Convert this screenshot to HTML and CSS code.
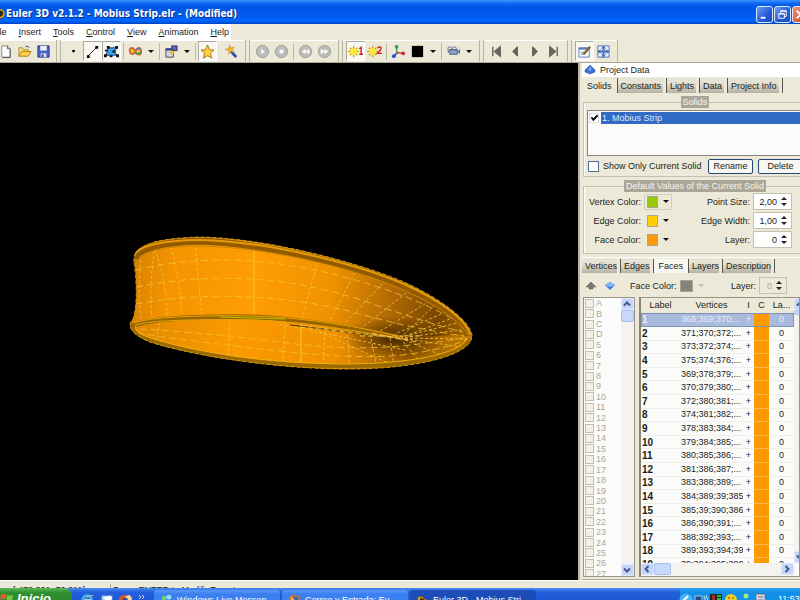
FILE: index.html
```html
<!DOCTYPE html>
<html lang="en">
<head>
<meta charset="utf-8">
<title>Euler 3D v2.1.2 - Mobius Strip.elr - (Modified)</title>
<link rel="stylesheet" href="styles.css">
</head>
<body>
<div class="app">
  <header class="titlebar">
    <svg class="logo" viewBox="0 0 5 12"><circle cx="-1" cy="6" r="5" fill="#2b2a10"/><path d="M-2 2Q4 1 4 6Q3 10-2 10" fill="none" stroke="#e0a010" stroke-width="1.500"/></svg>
    <h1>Euler 3D v2.1.2 - Mobius Strip.elr - (Modified)</h1>
    <div class="winbtns">
      <button aria-label="Minimize"><svg viewBox="0 0 16 16"><path d="M4 11.500h5" stroke="#fff" stroke-width="2"/></svg></button>
      <button aria-label="Restore"><svg viewBox="0 0 16 16"><path d="M6 6V4h6v6h-2M6 4.500h6M4 7h6v5H4zM4 7.500h6" fill="none" stroke="#fff"/></svg></button>
      <button class="close" aria-label="Close"><svg viewBox="0 0 16 16"><path d="M4 4l8 8M12 4l-8 8" stroke="#fff" stroke-width="2"/></svg></button>
    </div>
  </header>

  <nav class="menubar">
    <div class="menus">
      <a href="#"><u>F</u>ile</a><a href="#"><u>I</u>nsert</a><a href="#"><u>T</u>ools</a><a href="#"><u>C</u>ontrol</a><a href="#"><u>V</u>iew</a><a href="#"><u>A</u>nimation</a><a href="#"><u>H</u>elp</a>
    </div>
  </nav>

  <div class="toolbar">
    <div class="group first">
      <button aria-label="New"><svg viewBox="0 0 16 16"><path d="M4 2h6l3 3v9H4z" fill="#fff" stroke="#8a8a84"/><path d="M10 2v3h3M13 6v8.500H5" fill="none" stroke="#555"/></svg></button>
      <button aria-label="Open"><svg viewBox="0 0 16 16"><path d="M2 13V4h4l1 2h5v3" fill="#f6dc7a" stroke="#b8902c"/><path d="M2 13l3-5h10l-3 5z" fill="#ffd24a" stroke="#a8801c"/><path d="M9 3q3-2 4 1" fill="none" stroke="#447"/></svg></button>
      <button aria-label="Save"><svg viewBox="0 0 16 16"><path d="M2 2h12v12H2z" fill="#4a63c4" stroke="#26388c"/><path d="M4.500 2h7v5h-7z" fill="#e8eefc"/><path d="M5 10h6v4H5z" fill="#dfe4f2"/><path d="M6 11h2v3H6z" fill="#26388c"/></svg></button>
    </div>
    <div class="group">
      <button aria-label="Points"><svg viewBox="0 0 16 16"><circle cx="8" cy="7.500" r="1.500"/></svg></button>
      <button class="on" aria-label="Edges"><svg viewBox="0 0 16 16"><path d="M3 13L13 3" stroke="#222"/><path d="M2 12h3v3H2zM11 2h3v3h-3z"/></svg></button>
      <button class="on" aria-label="Faces"><svg viewBox="0 0 16 16"><path d="M4 4h10q-4 4 0 8H2q2-4 2-8z" fill="#3d9be8" stroke="#1a4c80"/><path d="M3 2h3v3H3zM12 2h3v3h-3zM0 11h3v3H0zM13 11h3v3h-3zM1 6h3v2H1zM9 7h3v2H9zM6 12h3v2H6z" fill="#111"/></svg></button>
      <i class="sep"></i>
      <button aria-label="Rings"><svg viewBox="0 0 16 16"><path d="M8 8C5 2 1 4 2 8s5 3 6 0 5-6 6-1-4 6-6 1z" fill="#f4c53a" stroke="#d3682f" stroke-width="2"/><path d="M8 9q2 4 6-1" fill="none" stroke="#3f9d58" stroke-width="2"/><path d="M9 6q3-3 4 0" fill="none" stroke="#6474c8" stroke-width="2"/></svg></button>
      <button class="drop" aria-label="Ring options"></button>
      <i class="sep"></i>
      <button aria-label="Transform"><svg viewBox="0 0 16 16"><path d="M2 5h8v9H2z" fill="#cdd3e8" stroke="#445"/><path d="M2 5h8v2H2z" fill="#34428c"/><path d="M8 2h6v5H9z" fill="#5a6ac8" stroke="#334"/><path d="M5 9l4-2 3 2-3 2z" fill="#e8b83c"/></svg></button>
      <button class="drop" aria-label="Transform options"></button>
      <i class="sep"></i>
      <button class="on" aria-label="Favorite"><svg viewBox="0 0 16 16"><path d="M8 1l2 5 5 .5-4 3.500 1.500 5L8 12.500 3.500 15 5 10 1 6.500 6 6z" fill="#ffd23c" stroke="#a8741c"/></svg></button>
      <i class="sep blank"></i>
      <button aria-label="Wizard"><svg viewBox="0 0 16 16"><path d="M6 6l7 8" stroke="#2a4cb0" stroke-width="3"/><path d="M6 1l1 3 4-1-2 3 2 3-4-1-2 3V7L1 6l4-2z" fill="#f2b430" stroke="#c88a1c" stroke-width=".5"/></svg></button>
    </div>
    <div class="group">
      <button aria-label="Play"><svg viewBox="0 0 16 16"><circle cx="8" cy="8" r="6.500" fill="#bcbcb8" stroke="#9a9a96"/><path d="M6.500 5l4 3-4 3z" fill="#fff"/></svg></button>
      <button aria-label="Stop"><svg viewBox="0 0 16 16"><circle cx="8" cy="8" r="6.500" fill="#bcbcb8" stroke="#9a9a96"/><path d="M6 6h4v4H6z" fill="#fff"/></svg></button>
      <i class="sep"></i>
      <button aria-label="Rewind"><svg viewBox="0 0 16 16"><circle cx="8" cy="8" r="6.500" fill="#bcbcb8" stroke="#9a9a96"/><path d="M8 5v6L4 8zM12 5v6L8 8z" fill="#fff"/></svg></button>
      <button aria-label="Fast forward"><svg viewBox="0 0 16 16"><circle cx="8" cy="8" r="6.500" fill="#bcbcb8" stroke="#9a9a96"/><path d="M4 5l4 3-4 3zM8 5l4 3-4 3z" fill="#fff"/></svg></button>
    </div>
    <div class="group">
      <button class="on" aria-label="Light 1"><svg viewBox="0 0 16 16"><path d="M6 2v12M0 8h12M2 4l8 8M10 4l-8 8" stroke="#d8a800" stroke-width="1.500"/><circle cx="6" cy="8" r="3.500" fill="#ffe838"/><path d="M12 5l2-1.500V11M12 11h4" fill="none" stroke="#d02020" stroke-width="1.500"/></svg></button>
      <button aria-label="Light 2"><svg viewBox="0 0 16 16"><path d="M6 2v12M0 8h12M2 4l8 8M10 4l-8 8" stroke="#d8a800" stroke-width="1.500"/><circle cx="6" cy="8" r="3.500" fill="#ffe838"/><path d="M11 4q4-2 4 1 0 1-4 5h5" fill="none" stroke="#d02020" stroke-width="1.500"/></svg></button>
      <i class="sep"></i>
      <button aria-label="Axes"><svg viewBox="0 0 16 16"><path d="M6 3v7" stroke="#35a050" stroke-width="1.500"/><path d="M6 10l-3 3" stroke="#2858c8" stroke-width="2"/><path d="M6 9l6 1" stroke="#c03030" stroke-width="1.500"/><circle cx="6" cy="3" r="2" fill="#35a050"/><circle cx="3" cy="13" r="2" fill="#2858c8"/><circle cx="13" cy="10" r="2" fill="#c83030"/></svg></button>
      <button aria-label="Background color"><svg viewBox="0 0 16 16"><path d="M2 2h12v12H2z"/></svg></button>
      <button class="drop" aria-label="Background options"></button>
      <i class="sep"></i>
      <button aria-label="Camera"><svg viewBox="0 0 16 16"><path d="M4 6h8v5H4z" fill="#8fa6c8" stroke="#4a5c80"/><circle cx="4" cy="5" r="2" fill="none" stroke="#5a6c90"/><circle cx="9" cy="5" r="2" fill="none" stroke="#5a6c90"/><path d="M12 8l3-3v6zM1 7h2v3" fill="#667a9c"/></svg></button>
      <button class="drop" aria-label="Camera options"></button>
    </div>
    <div class="group">
      <button aria-label="First frame"><svg viewBox="0 0 16 16"><path d="M4 3v10M12 3v10l-6-5z" fill="#66665e" stroke="#66665e" stroke-width="1.500"/></svg></button>
      <button aria-label="Previous frame"><svg viewBox="0 0 16 16"><path d="M10 3v10L5 8z" fill="#66665e" stroke="#55554e"/></svg></button>
      <button aria-label="Next frame"><svg viewBox="0 0 16 16"><path d="M6 3v10l5-5z" fill="#66665e" stroke="#55554e"/></svg></button>
      <button aria-label="Last frame"><svg viewBox="0 0 16 16"><path d="M12 3v10M4 3v10l6-5z" fill="#66665e" stroke="#66665e" stroke-width="1.500"/></svg></button>
    </div>
    <div class="group">
      <button class="on" aria-label="Edit data"><svg viewBox="0 0 16 16"><path d="M2 4h11v10H2z" fill="#f4f8ff" stroke="#5a80c0"/><path d="M2 4h11v2H2z" fill="#5a80c0"/><path d="M4 9h4M4 11h4" stroke="#88a"/><path d="M7 11l7-8" stroke="#8a6230" stroke-width="2.500"/></svg></button>
      <button aria-label="Fit view"><svg viewBox="0 0 16 16"><path d="M2 2h12v12H2z" fill="#e8f0ff" stroke="#4a70b8"/><path d="M8 2v12M2 8h12" stroke="#4a70b8" stroke-width="2"/><path d="M5 6L3 8l2 2M11 6l2 2-2 2M6 5l2-2 2 2M6 11l2 2 2-2" fill="none" stroke="#2850a8"/></svg></button>
    </div>
  </div>

  <main class="work">
    <section class="viewport" aria-label="3D view">
      <svg viewBox="0 63 578 517">
        <defs>
          <linearGradient id="outer" gradientUnits="userSpaceOnUse" x1="130" y1="280" x2="472" y2="330">
            <stop offset="0" stop-color="#d98200"/><stop offset=".12" stop-color="#f59400"/><stop offset=".35" stop-color="#ff9d04"/><stop offset=".58" stop-color="#f09200"/><stop offset=".78" stop-color="#a86404"/><stop offset=".9" stop-color="#754400"/><stop offset="1" stop-color="#a86800"/>
          </linearGradient>
          <linearGradient id="inner" gradientUnits="userSpaceOnUse" x1="130" y1="330" x2="472" y2="340">
            <stop offset="0" stop-color="#e08800"/><stop offset=".3" stop-color="#fc9a00"/><stop offset=".6" stop-color="#f09200"/><stop offset=".82" stop-color="#945800"/><stop offset="1" stop-color="#c47c00"/>
          </linearGradient>
          <radialGradient id="pinch" gradientUnits="userSpaceOnUse" cx="394" cy="338" r="52" gradientTransform="matrix(1 0 0 .42 0 196)">
            <stop offset="0" stop-color="#3c2400"/><stop offset="1" stop-color="#5a3400" stop-opacity="0"/>
          </radialGradient>
          <clipPath id="shape"><path d="M134 258C134 246 154 238 200 237C260 238 350 259 404 282C440 298 472 322 472 336C472 354 420 370 340 369C270 368 190 355 150 342C132 335 126 326 133 319Q139 300 134 258Z"/></clipPath>
        </defs>
        <g clip-path="url(#shape)">
          <path d="M120 230H480V380H120Z" fill="url(#outer)"/>
          <path d="M130 328C132 318 200 315 255 317C310 321 360 330 400 338L474 334V372H130Z" fill="url(#inner)"/>
          <path d="M340 290H475V370H340Z" fill="url(#pinch)"/>
          <g fill="none" stroke="#f8c236" stroke-width=".8" stroke-dasharray="7 4">
            <path d="M136 270Q190 257 250 261T375 286 468 330"/>
            <path d="M136 287Q190 276 250 279T370 303 467 333"/>
            <path d="M136 304Q190 294 250 297T360 314 464 336"/>
            <path d="M140 329Q210 333 280 342T400 346 468 337"/>
            <path d="M137 333Q210 344 290 352T410 354 470 338"/>
          </g>
          <g fill="none" stroke="#f6c63e" stroke-width=".8" stroke-dasharray="3 2">
            <path d="M142 250Q137 288 141 319M155 246Q149 285 152 318M155 249Q168 288 167 317M171 247Q181 285 182 317"/>
            <path d="M195 243L202 316M319 258L302 318M357 268L329 323M386 280L343 325M410 290L360 329M430 301L377 333M446 312L390 336M461 322L397 338"/>
            <path d="M400 338L438 302M400 338L455 317M400 338L468 329M400 338L470 339M400 338L462 347M400 338L443 356M400 338L420 362M390 338L394 366M370 334L377 368M347 330L350 369M325 327L323 369M285 321L283 364M230 318L228 359M160 322L155 344M300 325L398 339M280 324L405 350M320 332L390 364"/>
          </g>
          <path d="M254 240V320M301 325V367" stroke="#ffc52c"/>
          <path d="M135 259C137 249 160 242 200 241C260 243 350 263 404 286C440 302 466 322 468 336" fill="none" stroke="#935a00" stroke-width="7"/>
          <path d="M134 256C137 247 160 240 200 240C260 241 350 261 404 284C440 300 467 320 470 335" fill="none" stroke="#e39a08" stroke-width="2"/>
          <path d="M137 262C142 250 170 246 200 246C260 247 340 264 394 286C430 301 460 320 468 335" fill="none" stroke="#c88806"/>
          <path d="M132 328C134 319 200 316 255 317C310 320 360 329 402 338" fill="none" stroke="#9b6200" stroke-width="5"/>
          <path d="M132 324C144 317 200 315 255 316C310 318 360 327 402 337" fill="none" stroke="#dfa600"/>
          <path d="M136 325C150 320 200 319 255 320C310 322 360 332 402 339" fill="none" stroke="#e6a40c"/>
          <path d="M220 317L285 319" stroke="#b9c600"/>
          <path d="M290 325Q340 331 399 339" fill="none" stroke="#4a3000"/>
          <path d="M300 327Q350 332 412 340M360 336h60M372 333l44 9" fill="none" stroke="#ffd75c" stroke-width=".8" stroke-dasharray="5 3"/>
          <path d="M133 323Q128 334 152 341C200 356 270 366 340 366C420 366 468 354 470 338" fill="none" stroke="#9b6a00" stroke-width="4"/>
          <path d="M136 325Q132 332 154 339C200 353 270 363 340 364C415 364 461 353 467 338" fill="none" stroke="#f0ad10"/>
        </g>
        <path d="M134 262C132 246 154 238 200 237C260 238 350 259 404 282C440 298 472 322 472 336C472 354 420 370 340 369C270 368 190 355 150 342C132 335 126 326 133 319Q139 300 134 262" fill="none" stroke="#c99614" stroke-dasharray="4 2"/>
      </svg>
    </section>

    <aside class="panel">
      <div class="phead"><svg viewBox="0 0 12 10"><path d="M6 0l5 5v2L6 9 1 7V5z" fill="#3b6fd6" stroke="#28509c" stroke-width=".5"/><path d="M6 1l2 4-2 1-2-1z" fill="#7aa0ec"/></svg>Project Data</div>
      <div class="tabs" role="tablist">
        <button class="active" role="tab">Solids</button><button role="tab">Constants</button><button role="tab">Lights</button><button role="tab">Data</button><button role="tab">Project Info</button>
      </div>
      <fieldset class="solids">
        <legend>Solids</legend>
        <div class="list">
          <div class="item"><input type="checkbox" id="s1" checked><label for="s1">1. Mobius Strip</label></div>
        </div>
        <div class="actions">
          <input type="checkbox" id="only"><label for="only">Show Only Current Solid</label>
          <button>Rename</button><button>Delete</button>
        </div>
      </fieldset>
      <fieldset class="defaults">
        <legend>Default Values of the Current Solid</legend>
        <div class="form">
          <span class="lab" id="vc">Vertex Color:</span><button class="color raised" aria-labelledby="vc"><i class="sw green"></i><i class="tri"></i></button>
          <label for="ps">Point Size:</label><div class="spin"><input id="ps" value="2,00"><button aria-label="Point size up or down"></button></div>
          <span class="lab" id="ec">Edge Color:</span><button class="color" aria-labelledby="ec"><i class="sw yellow"></i><i class="tri"></i></button>
          <label for="ew">Edge Width:</label><div class="spin"><input id="ew" value="1,00"><button aria-label="Edge width up or down"></button></div>
          <span class="lab" id="fc">Face Color:</span><button class="color" aria-labelledby="fc"><i class="sw orange"></i><i class="tri"></i></button>
          <label for="ly">Layer:</label><div class="spin"><input id="ly" value="0"><button aria-label="Layer up or down"></button></div>
        </div>
      </fieldset>
      <div class="tabs lower" role="tablist">
        <button role="tab">Vertices</button><button role="tab">Edges</button><button class="active" role="tab">Faces</button><button role="tab">Layers</button><button role="tab">Description</button>
      </div>
      <div class="facebar">
        <button class="mv" aria-label="Move up"><svg viewBox="0 0 12 10"><path d="M6 1l5 5H8v2H4V6H1z" fill="#77776c" stroke="#55554e" stroke-width=".5"/></svg></button>
        <button class="mv" aria-label="Move down"><svg viewBox="0 0 12 10"><path d="M6 9L1 4l5-3 5 3z" fill="#3878e0"/><path d="M1 4l5-3 5 3-5 2z" fill="#8ab6fa"/></svg></button>
        <span class="lab" id="fc2">Face Color:</span><button class="color" disabled aria-labelledby="fc2"><i class="sw gray"></i><i class="tri"></i></button>
        <label for="ly2">Layer:</label><div class="spin off"><input id="ly2" value="0" disabled><button aria-label="Face layer up or down"></button></div>
      </div>
      <div class="data">
        <div class="layers">
          <div class="checks">
            <label><input type="checkbox" disabled>A</label><label><input type="checkbox" disabled>B</label><label><input type="checkbox" disabled>C</label><label><input type="checkbox" disabled>D</label><label><input type="checkbox" disabled>5</label><label><input type="checkbox" disabled>6</label><label><input type="checkbox" disabled>7</label><label><input type="checkbox" disabled>8</label><label><input type="checkbox" disabled>9</label><label><input type="checkbox" disabled>10</label><label><input type="checkbox" disabled>11</label><label><input type="checkbox" disabled>12</label><label><input type="checkbox" disabled>13</label><label><input type="checkbox" disabled>14</label><label><input type="checkbox" disabled>15</label><label><input type="checkbox" disabled>16</label><label><input type="checkbox" disabled>17</label><label><input type="checkbox" disabled>18</label><label><input type="checkbox" disabled>19</label><label><input type="checkbox" disabled>20</label><label><input type="checkbox" disabled>21</label><label><input type="checkbox" disabled>22</label><label><input type="checkbox" disabled>23</label><label><input type="checkbox" disabled>24</label><label><input type="checkbox" disabled>25</label><label><input type="checkbox" disabled>26</label><label><input type="checkbox" disabled>27</label>
          </div>
          <div class="vbar">
            <button aria-label="Scroll layers up"><svg viewBox="0 0 12 12"><path d="M3 7.500l3-3 3 3" /></svg></button>
            <i class="thumb"></i>
            <button class="end" aria-label="Scroll layers down"><svg viewBox="0 0 12 12"><path d="M3 4.500l3 3 3-3"/></svg></button>
          </div>
        </div>
        <div class="faces">
          <div class="tablebox">
            <div class="clip">
              <table>
                <thead><tr><th class="c1">Label</th><th class="c2">Vertices</th><th class="c3">I</th><th class="c4">C</th><th class="c5">La...</th></tr></thead>
                <tbody>
                  <tr class="sel"><th>1</th><td>368;369;370;...</td><td>+</td><td class="o"></td><td>0</td></tr>
                  <tr><th>2</th><td>371;370;372;...</td><td>+</td><td class="o"></td><td>0</td></tr>
                  <tr><th>3</th><td>373;372;374;...</td><td>+</td><td class="o"></td><td>0</td></tr>
                  <tr><th>4</th><td>375;374;376;...</td><td>+</td><td class="o"></td><td>0</td></tr>
                  <tr><th>5</th><td>369;378;379;...</td><td>+</td><td class="o"></td><td>0</td></tr>
                  <tr><th>6</th><td>370;379;380;...</td><td>+</td><td class="o"></td><td>0</td></tr>
                  <tr><th>7</th><td>372;380;381;...</td><td>+</td><td class="o"></td><td>0</td></tr>
                  <tr><th>8</th><td>374;381;382;...</td><td>+</td><td class="o"></td><td>0</td></tr>
                  <tr><th>9</th><td>378;383;384;...</td><td>+</td><td class="o"></td><td>0</td></tr>
                  <tr><th>10</th><td>379;384;385;...</td><td>+</td><td class="o"></td><td>0</td></tr>
                  <tr><th>11</th><td>380;385;386;...</td><td>+</td><td class="o"></td><td>0</td></tr>
                  <tr><th>12</th><td>381;386;387;...</td><td>+</td><td class="o"></td><td>0</td></tr>
                  <tr><th>13</th><td>383;388;389;...</td><td>+</td><td class="o"></td><td>0</td></tr>
                  <tr><th>14</th><td>384;389;39;385</td><td>+</td><td class="o"></td><td>0</td></tr>
                  <tr><th>15</th><td>385;39;390;386</td><td>+</td><td class="o"></td><td>0</td></tr>
                  <tr><th>16</th><td>386;390;391;...</td><td>+</td><td class="o"></td><td>0</td></tr>
                  <tr><th>17</th><td>388;392;393;...</td><td>+</td><td class="o"></td><td>0</td></tr>
                  <tr><th>18</th><td>389;393;394;39</td><td>+</td><td class="o"></td><td>0</td></tr>
                  <tr><th>19</th><td>39;394;395;390</td><td>+</td><td class="o"></td><td>0</td></tr>
                </tbody>
              </table>
            </div>
            <div class="vbar">
              <button aria-label="Scroll faces up"><svg viewBox="0 0 12 12"><path d="M3 7.500l3-3 3 3"/></svg></button>
              <i class="thumb short"></i>
              <button class="end" aria-label="Scroll faces down"><svg viewBox="0 0 12 12"><path d="M3 4.500l3 3 3-3"/></svg></button>
            </div>
          </div>
          <div class="hbar">
            <button aria-label="Scroll left"><svg viewBox="0 0 12 12"><path d="M7.500 3l-3 3 3 3"/></svg></button>
            <i class="thumb"></i>
            <button class="end" aria-label="Scroll right"><svg viewBox="0 0 12 12"><path d="M4.500 3l3 3-3 3"/></svg></button>
          </div>
        </div>
      </div>
    </aside>
  </main>

  <div class="status"><span class="coords">[ 478,301, 70,811]</span><span>Press ENTER to Modify Target</span></div>

  <footer class="taskbar">
    <button class="start"><svg viewBox="0 0 16 16"><path d="M1 3q3-2 6 0L6 8Q3 6 0 8z" fill="#f0582c"/><path d="M8 3q3 2 6 0l-1 5q-3 2-6 0z" fill="#7cc83c"/><path d="M0 9q3-2 6 0l-1 5q-3-2-6 0z" fill="#4a90f0"/></svg>Inicio</button>
    <div class="quick">
      <svg viewBox="0 0 16 16"><circle cx="7" cy="8" r="5" fill="none" stroke="#45b8f4" stroke-width="3"/><path d="M4 8h7" stroke="#b8e8ff" stroke-width="2"/><path d="M2 11Q8 1 14 3" stroke="#e0c860" fill="none"/></svg>
      <svg viewBox="0 0 16 16"><path d="M2 3h12v11H2z" fill="#b4d4f2"/><path d="M4 5l7-2 3 3-6 5z" fill="#fff"/><path d="M3 8l5 4" stroke="#4878b8"/></svg>
      <svg viewBox="0 0 16 16"><circle cx="6" cy="8" r="6" fill="#d8571c"/><path d="M7 4l5-2 3 4-3 8-4-3z" fill="#f2d4a0"/><circle cx="7" cy="8" r="3" fill="#32508c"/></svg>
      <svg class="more" viewBox="0 0 8 14"><path d="M1 2l2 2-2 2M4 2l2 2-2 2" fill="none" stroke="#c4dcff"/></svg>
    </div>
    <button class="task"><svg viewBox="0 0 16 16"><circle cx="5" cy="5" r="3" fill="#6cd07c"/><circle cx="11" cy="4" r="3" fill="#9ae0f4"/><path d="M1 14q4-9 8 0zM7 14q4-10 8 0z" fill="#58b8d8"/></svg>Windows Live Messen...</button>
    <button class="task"><svg viewBox="0 0 16 16"><circle cx="8" cy="8" r="7" fill="#e0701c"/><circle cx="9" cy="7" r="4" fill="#3c64b4"/><path d="M3 3l5 3-3 5z" fill="#f4b040"/></svg>Correo y Entrada: Eu...</button>
    <button class="task current"><svg viewBox="0 0 16 16"><path d="M2 4q6-3 8 2 6 0 4 6-8 4-12-2z" fill="#d8a020" stroke="#70520c"/><path d="M5 6q4 0 6 4" stroke="#342808" stroke-width="2" fill="none"/></svg>Euler 3D - Mobius Stri...</button>
    <div class="tray">
      <svg viewBox="0 0 14 14"><circle cx="7" cy="7" r="6.500" fill="#4ab0f8"/><path d="M9 3L5 7l4 4" fill="none" stroke="#fff" stroke-width="2"/></svg>
      <svg viewBox="0 0 14 14"><path d="M1 3h7v6H1z" fill="#244a80" stroke="#a8c8e8"/><path d="M10 3q2 3 0 7M12 2q3 4 0 9" fill="none" stroke="#d0e4f8"/></svg>
      <svg viewBox="0 0 14 14"><path d="M1 1h12v12H1z" fill="#182818"/><path d="M3 2h3v9H3z" fill="#a82828"/><path d="M8 3h4M8 6h4" stroke="#30b850" stroke-width="2"/></svg>
      <svg viewBox="0 0 14 14"><circle cx="7" cy="7" r="6" fill="#f4cc24"/><path d="M4 5h2M8 5h2M4 8q3 3 6 0" stroke="#755000" fill="none"/></svg>
      <svg viewBox="0 0 14 14"><circle cx="7" cy="3" r="2.500" fill="#9af088"/><path d="M4 13q3-13 6 0z" fill="#4cc858"/></svg>
      <svg viewBox="0 0 14 14"><path d="M2 1h9v11H2z" fill="#d8dce4" stroke="#63738c"/><path d="M4 4h5M4 7h5" stroke="#596880"/><circle cx="10" cy="9" r="3" fill="#9bb4d8"/></svg>
      <time>11:53</time>
    </div>
  </footer>
</div>
</body>
</html>
```
FILE: styles.css
```css
*, ::before, ::after { box-sizing: border-box; }
html, body { height: 100%; }
body {
  margin: 0;
  overflow: hidden;
  font: 9px/12px "Liberation Sans", sans-serif;
  color: #1c1c1c;
  background: #ece9d8;
}
button, input { font: inherit; color: inherit; margin: 0; padding: 0; }
button { border: 0; background: none; }
svg { display: block; }
.app { display: flex; flex-direction: column; height: 100vh; overflow: hidden; }

/* title bar */
.titlebar {
  display: flex; align-items: center; flex: none; height: 24px; padding-top: 4px;
  background: linear-gradient(#3a93ff 0, #0a62ee 4px, #0056e4 8px, #005cf2 16px, #0066ff 21px, #0040c0 24px);
}
.logo { width: 5px; height: 12px; }
.titlebar h1 {
  flex: 1; margin: 0; padding-left: 1px; white-space: nowrap; color: #fff;
  font: bold 10px/16px "DejaVu Sans Condensed", "DejaVu Sans", sans-serif;
  text-shadow: 1px 1px #0a2f8c;
}
.winbtns { display: flex; gap: 1px; margin-right: -9px; }
.winbtns button { width: 17px; height: 17px; border: 1px solid #dce8ff; border-radius: 3px; background: linear-gradient(135deg, #6e9bf4, #2458d8 60%, #1a4cc4); }
.winbtns .close { background: linear-gradient(135deg, #f09078, #d8401c); }

/* menu */
.menubar { display: flex; flex: none; height: 16px; }
.menus { display: flex; gap: 12px; padding: 2px 2px 0 0; margin-left: -8px; background: #fff; }
.menus a { color: #1c1c1c; text-decoration: none; }

/* toolbar */
.toolbar { display: flex; flex: none; height: 23px; border-bottom: 1px solid #aca899; }
.group { display: flex; align-items: center; flex: none; margin-left: 3px; padding: 0 4px 0 3px; border: 1px solid #b8b5a2; border-width: 0 1px; box-shadow: inset 0 1px #fff; }
.group.first { margin-left: -8px; border-left: 0; padding: 0 3px 0 4px; }
.group button { display: grid; place-items: center; flex: none; width: 19px; height: 20px; border: 1px solid transparent; }
.group button svg { width: 15px; height: 15px; }
.group .on { background: #f8f7f1; border-color: #aca899 #fff #fff #aca899; }
.group .drop { width: 12px; }
.drop::after, .tri { width: 6px; border: 3px solid transparent; border-top-color: #111; border-bottom: 0; content: ""; }
.sep { flex: none; width: 1px; height: 17px; margin: 0 2px; background: #bdb9a7; }
.sep.blank { background: none; }

/* work area */
.work { display: flex; flex: 1; min-height: 0; }
.viewport { flex: 1; min-width: 0; background: #000; }
.viewport svg { width: 100%; height: 100%; }
.panel { display: flex; flex-direction: column; flex: none; width: 222px; padding-left: 2px; overflow: hidden; background: #ece9d8; border-left: 2px solid #b9b6a6; }
.phead { display: flex; align-items: center; gap: 4px; flex: none; height: 14px; padding-left: 2px; background: #fff; }
.phead svg { width: 12px; height: 10px; }

.tabs { display: flex; flex: none; height: 18px; padding: 1px 0 2px; }
.tabs button { padding: 0 5px 0 3px; border-right: 1px solid #55534a; box-shadow: inset -3px 0 #ece9d8; background: linear-gradient(#e6e3d4 30%, #b5b2a5); white-space: nowrap; }
.tabs .active { padding: 0 5px; background: none; box-shadow: none; }
.tabs.lower { height: 17px; border-top: 1px solid #fff; margin-top: 3px; padding: 1px 0; }
.tabs.lower button { padding: 0 3px; }
.tabs.lower .active { padding: 0 5px; background: #f7f6f0; }

/* group boxes */
fieldset { flex: none; min-width: 0; margin: 0 -4px 0 1px; padding: 0 0 0 3px; border: 1px solid #c4c1b0; box-shadow: inset 1px 0 #fff; }
legend { margin: 0 auto; padding: 0 2px; line-height: 12px; color: #f6f4ea; background: #aaa799; }
.solids { margin-top: 1px; }
.list { height: 46px; margin-top: 2px; padding: 1px; border: 1px solid #888577; background: #fbfbf9; }
.item { display: flex; align-items: center; height: 12px; }
.item label { flex: 1; margin-left: 2px; padding-left: 1px; color: #dfe9fa; background: #316ac5; }
input[type="checkbox"] { appearance: none; flex: none; width: 11px; height: 11px; border: 1px solid #4f6e94; background: #fff; }
.item input[type="checkbox"] { display: grid; place-items: center; width: 10px; height: 10px; border-color: #ddd; }
.item input:checked::after { content: ""; width: 7px; height: 4px; margin-bottom: 2px; border: 2px solid #111; border-width: 0 0 2px 2px; transform: rotate(-45deg); }
.actions { display: flex; align-items: center; height: 20px; padding-left: 1px; }
.actions label { flex: 1; margin-left: 4px; white-space: nowrap; }
.actions button { width: 45px; height: 15px; margin-left: 5px; border: 1px solid #24477a; border-radius: 2px; background: #f8f7f2; }
.defaults { margin-top: 3px; padding: 0 0 4px 3px; }
.form { display: grid; grid-template-columns: 54px 31px 1fr 50px; grid-auto-rows: 19px; align-items: center; }
.form label, .form .lab { text-align: right; white-space: nowrap; }
.form label { margin-right: 3px; }
.color { display: flex; align-items: center; gap: 5px; height: 16px; margin-left: 3px; padding: 0 3px; }
.raised { box-shadow: inset 0 0 0 1px #d1cebd; }
.sw { width: 13px; height: 12px; border: 1px solid #aaa68f; }
.green { background: #94c800; }
.yellow { background: #ffcd05; }
.orange { background: #f89a0a; }
.gray { background: #83827b; }
.spin { display: flex; width: 39px; height: 17px; border: 1px solid #c3c0b0; background: #fff; }
.spin input { flex: 1; min-width: 0; border: 0; background: none; text-align: right; }
.spin button { display: flex; flex-direction: column; align-items: center; justify-content: center; gap: 3px; flex: none; width: 14px; }
.spin button::before, .spin button::after { content: ""; width: 6px; border: 3px solid transparent; border-bottom-color: #222; border-top: 0; }
.spin button::after { border-bottom: 0; border-top: 3px solid #222; }

.facebar { display: flex; align-items: center; flex: none; height: 23px; padding-left: 3px; }
.mv { width: 12px; margin-right: 7px; }
.mv svg { width: 12px; height: 10px; }
.facebar .lab { margin-left: 7px; }
.facebar .color { margin-left: 0; }
.color:disabled .tri { border-top-color: #c3c0b0; }
.facebar label { margin-left: auto; margin-right: 3px; }
.spin.off { width: 28px; margin-right: 13px; background: none; }
.spin.off input { color: #aaa799; }

/* data area */
.data { display: flex; gap: 4px; flex: 1; min-height: 0; padding: 0 0 2px 1px; border-bottom: 1px solid #aca899; }
.layers, .faces { border: 1px solid #999687; background: #fbfbf9; }
.layers { display: flex; flex: none; width: 52px; overflow: hidden; }
.checks { display: grid; grid-auto-rows: 1fr; flex: 1; height: calc(100% + 3px); }
.checks label { display: flex; align-items: center; gap: 2px; min-height: 0; line-height: 10px; color: #aaa89c; }
.checks input[type="checkbox"] { width: 9px; height: 9px; margin-left: 1px; border-color: #c2bfae; background: #f2f1e8; }
.vbar { display: flex; flex-direction: column; flex: none; width: 13px; background: #f4f3ee; }
.vbar button, .hbar button { flex: none; width: 13px; height: 12px; border-radius: 2px; background: #c5d5fa; box-shadow: inset 0 0 0 1px #dfe8fd; }
.vbar svg, .hbar svg { width: 12px; height: 12px; fill: none; stroke: #3f5a8c; stroke-width: 2; }
.thumb { display: block; height: 12px; border: 1px solid #a9bfee; border-radius: 2px; background: #c9d8fb; }
.thumb.short { height: 5px; }
.vbar .end { margin-top: auto; }
.faces { display: flex; flex-direction: column; flex: 1; min-width: 0; border-left: 2px solid #888577; overflow: hidden; }
.tablebox { display: flex; flex: 1; min-height: 0; margin-right: -8px; }
.clip { flex: 1; min-width: 0; overflow: hidden; }
.hbar { display: flex; flex: none; height: 13px; margin-right: 5px; background: #f4f3ee; }
.hbar .thumb { width: 17px; }
.hbar .end { margin-left: auto; }
table { width: 100%; height: calc(100% + 9px); table-layout: fixed; border-collapse: collapse; white-space: nowrap; }
th, td { padding: 0; overflow: hidden; line-height: 11px; text-align: center; }
thead th { height: 15px; font-weight: normal; background: #ece9d8; border-bottom: 1px solid #c6c3b3; }
.c1 { width: 39px; }
.c2 { width: 63px; }
.c3 { width: 11px; }
.c4 { width: 15px; }
tbody tr { border-bottom: 1px solid #efeee8; }
tbody th { padding-left: 1px; text-align: left; font-size: 10px; }
tbody td:nth-child(2) { text-align: left; padding-left: 1px; }
.o { background: #ff9900; border-bottom: 1px solid #ffb84c; }
.sel { color: #e8eefa; background: #a9badc; outline: 1px solid #7f92b8; outline-offset: -1px; }

/* status and task bars */
.status { display: flex; flex: none; height: 8px; padding: 3px 0 0 13px; overflow: hidden; background: #ece9d8; border-top: 1px solid #fff; }
.coords { width: 98px; margin-right: 2px; border-right: 1px solid #aca899; }
.taskbar { display: flex; flex: none; align-items: flex-start; height: 12px; overflow: hidden; color: #fff; background: linear-gradient(#4a8cf0, #2460dc 4px, #1f58d4); }
.start { display: flex; align-items: center; gap: 2px; width: 72px; height: 22px; border-radius: 0 8px 8px 0; background: linear-gradient(#5cb85a, #2f8e2f 5px, #2d882d); font: italic bold 13px/20px "Liberation Sans", sans-serif; }
.start svg { width: 15px; height: 15px; }
.quick { display: flex; gap: 5px; width: 82px; padding: 5px 0 0 9px; }
.quick svg { width: 14px; height: 14px; }
.quick .more { width: 8px; }
.task { display: flex; align-items: center; gap: 4px; width: 126px; height: 20px; margin: 2px 2px 0 0; padding-left: 6px; border-radius: 3px; background: linear-gradient(#5a9af8, #3c80f0 4px); white-space: nowrap; }
.task svg { width: 13px; height: 13px; }
.task.current { background: #1b4cb8; }
.tray { display: flex; gap: 2px; width: 120px; height: 24px; margin-left: auto; padding-top: 5px; background: linear-gradient(#2ba4f2, #1290e9 4px); }
.tray svg { flex: none; width: 14px; height: 14px; margin-left: -1px; }
.tray time { margin-left: 8px; }
```
